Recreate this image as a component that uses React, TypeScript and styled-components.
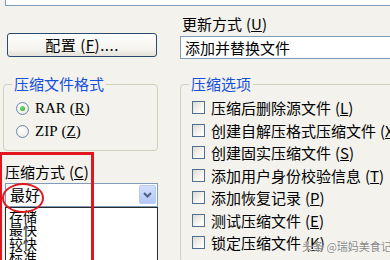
import React from "react";
import styled, { createGlobalStyle } from "styled-components";

const Global = createGlobalStyle`
  html, body { margin: 0; padding: 0; }
  body {
    background: #f3f2ec;
    font-family: "Noto Sans CJK SC", "Noto Sans", sans-serif;
    color: #000;
  }
`;

const Page = styled.div`
  position: relative;
  width: 390px;
  height: 260px;
  overflow: hidden;
  background: #f3f2ec;
`;

const TopField = styled.div`
  margin-left: 5px;
  width: 400px;
  height: 5px;
  background: #fff;
  border: 1px solid #7f9db9;
  border-top: none;
`;

const Columns = styled.div`
  display: grid;
  grid-template-columns: 155px 240px;
  column-gap: 22px;
  padding-left: 3px;
`;

const LeftCol = styled.div`
  display: flex;
  flex-direction: column;
  padding-top: 27px;
`;

const RightCol = styled.div`
  display: flex;
  flex-direction: column;
  padding-top: 10px;
`;

const Button = styled.div`
  margin: 0 1px 0 4px;
  height: 24px;
  box-sizing: border-box;
  border: 1px solid #2b4a6f;
  border-radius: 3px;
  background: linear-gradient(#ffffff, #f4f3ee 70%, #e4e2d8);
  display: flex;
  align-items: center;
  justify-content: center;
  font-size: 15px;
  line-height: 16px;
  letter-spacing: 0.5px;
`;

const GroupBox = styled.fieldset<{ $top: number }>`
  margin: ${(p) => p.$top}px 0 0 0;
  padding: 4.5px 0 7px 8px;
  border: 1px solid #d0d0bf;
  border-radius: 4px;
  min-width: 0;
`;

const Legend = styled.legend`
  padding: 0 2px;
  font-size: 15px;
  line-height: 16px;
  color: #1650d8;
`;

const RadioRow = styled.div`
  display: flex;
  align-items: center;
  height: 23px;
  margin-left: 4px;
  gap: 6px;
  font-family: "Liberation Serif", "Noto Sans CJK SC", serif;
  font-size: 15px;
`;

const RadioDot = styled.span<{ $on?: boolean }>`
  position: relative;
  width: 13px;
  height: 13px;
  box-sizing: border-box;
  border-radius: 50%;
  border: 1px solid #6c88a8;
  background: radial-gradient(circle at 40% 35%, #ffffff, #e6e4dc);
  display: flex;
  align-items: center;
  justify-content: center;
  &::after {
    content: "";
    display: ${(p) => (p.$on ? "block" : "none")};
    width: 5px;
    height: 5px;
    border-radius: 50%;
    background: radial-gradient(circle at 40% 35%, #7be07b, #21a121);
  }
`;

const FieldLabel = styled.div<{ $top: number; $indent: number }>`
  margin-top: ${(p) => p.$top}px;
  padding-left: ${(p) => p.$indent}px;
  font-size: 15px;
  line-height: 16px;
  white-space: nowrap;
`;

const TextField = styled.div`
  margin-top: 4px;
  height: 23px;
  box-sizing: border-box;
  border: 1px solid #7f9db9;
  background: #fff;
  padding-left: 4px;
  display: flex;
  align-items: center;
  font-size: 15px;
  white-space: nowrap;
`;

const Combo = styled.div`
  margin: 3px 0 0 2px;
  height: 24px;
  box-sizing: border-box;
  border: 1px solid #7f9db9;
  background: #fff;
  display: flex;
  align-items: center;
  justify-content: space-between;
  padding-left: 4px;
  font-size: 15px;
`;

const ComboArrow = styled.span`
  width: 17px;
  height: 19px;
  margin-right: 1px;
  box-sizing: border-box;
  border: 1px solid #b7cbf6;
  border-radius: 2px;
  background: linear-gradient(#d2defd, #b4c8f6);
  display: flex;
  align-items: center;
  justify-content: center;
`;

const ListBox = styled.div`
  margin-left: 2px;
  height: 60px;
  box-sizing: border-box;
  border: 1px solid #2a2a2a;
  border-bottom: none;
  background: #fff;
  padding: 2px 0 0 3px;
  overflow: hidden;
`;

const ListItem = styled.div`
  font-size: 14px;
  line-height: 13.5px;
  height: 13.5px;
`;

const CheckRow = styled.div`
  display: flex;
  align-items: center;
  height: 22.5px;
  margin-left: 3px;
  gap: 6px;
  font-size: 15px;
  white-space: nowrap;
`;

const CheckBox = styled.span`
  flex: none;
  width: 13px;
  height: 13px;
  box-sizing: border-box;
  border: 1px solid #4f6f94;
  background: linear-gradient(135deg, #dcdad0, #f6f5f0 60%, #ffffff);
`;

const AccKey = styled.span`
  margin-left: 4px;
`;

const RedRect = styled.div`
  position: absolute;
  left: -1px;
  top: 152px;
  width: 95px;
  height: 130px;
  box-sizing: border-box;
  border: 3px solid #e2161f;
  pointer-events: none;
`;

const RedEllipse = styled.div`
  position: absolute;
  left: 2px;
  top: 183px;
  width: 42px;
  height: 30px;
  box-sizing: border-box;
  border: 2.5px solid #e2161f;
  border-radius: 50%;
  pointer-events: none;
`;

const Watermark = styled.div`
  position: absolute;
  left: 302px;
  top: 239px;
  font-size: 11px;
  line-height: 14px;
  color: rgba(110, 110, 110, 0.85);
  text-shadow: 0 0 2px #fff, 0 0 1px #fff;
  white-space: nowrap;
`;

const Acc: React.FC<{ k: string }> = ({ k }) => (
  <AccKey>
    (<u>{k}</u>)
  </AccKey>
);

const checks: [string, string][] = [
  ["压缩后删除源文件", "L"],
  ["创建自解压格式压缩文件", "X"],
  ["创建固实压缩文件", "S"],
  ["添加用户身份校验信息", "T"],
  ["添加恢复记录", "P"],
  ["测试压缩文件", "E"],
  ["锁定压缩文件", "K"],
];

export default function App() {
  return (
    <Page>
      <Global />
      <TopField />
      <Columns>
        <LeftCol>
          <Button>
            配置<Acc k="F" />....
          </Button>
          <GroupBox $top={19}>
            <Legend>压缩文件格式</Legend>
            <RadioRow>
              <RadioDot $on />
              <span>
                RAR<Acc k="R" />
              </span>
            </RadioRow>
            <RadioRow>
              <RadioDot />
              <span>
                ZIP<Acc k="Z" />
              </span>
            </RadioRow>
          </GroupBox>
          <FieldLabel $top={13} $indent={2}>
            压缩方式<Acc k="C" />
          </FieldLabel>
          <Combo>
            最好
            <ComboArrow>
              <svg width="9" height="6" viewBox="0 0 9 6">
                <path d="M1 1 L4.5 4.5 L8 1" fill="none" stroke="#4d6185" strokeWidth="2" />
              </svg>
            </ComboArrow>
          </Combo>
          <ListBox>
            <ListItem>存储</ListItem>
            <ListItem>最快</ListItem>
            <ListItem>较快</ListItem>
            <ListItem>标准</ListItem>
          </ListBox>
        </LeftCol>
        <RightCol>
          <FieldLabel $top={0} $indent={2}>
            更新方式<Acc k="U" />
          </FieldLabel>
          <TextField>添加并替换文件</TextField>
          <GroupBox $top={17}>
            <Legend>压缩选项</Legend>
            {checks.map(([t, k]) => (
              <CheckRow key={k}>
                <CheckBox />
                <span>
                  {t}
                  <Acc k={k} />
                </span>
              </CheckRow>
            ))}
          </GroupBox>
        </RightCol>
      </Columns>
      <RedRect />
      <RedEllipse />
      <Watermark>头条 @瑞妈美食记</Watermark>
    </Page>
  );
}
